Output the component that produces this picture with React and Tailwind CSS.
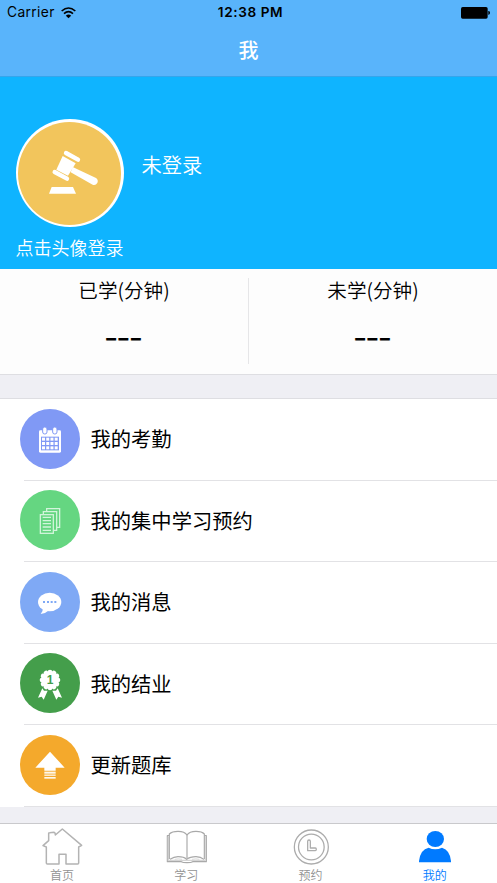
import React, { useState } from 'react';

const WifiIcon = () => (
  <svg viewBox="0 0 45 36" className="w-[15px] h-3">
    <g fill="none" stroke="#000" strokeWidth="4.8">
      <path d="M2 12 Q22.500 -6 43 12" />
      <path d="M9 20 Q22.500 8 36 20" />
    </g>
    <path d="M14.500 26 Q22.500 19 30.500 26 L22.500 34 Z" />
  </svg>
);

const BatteryIcon = () => (
  <svg viewBox="0 0 87 36" className="w-[29px] h-3">
    <rect x="0" y="0" width="80" height="35" rx="5" />
    <path d="M82 12 H84 Q87 14 87 17.500 Q87 21 84 23 H82 Z" />
  </svg>
);

const GavelIcon = () => (
  <svg viewBox="0 0 309 309" className="w-[103px] h-[103px]" fill="#fff">
    <g transform="translate(-58 -51)">
      <path d="M159 246 H223 L232 266 H151 Z" />
      <path d="M192 153 L231 175 L208 212 L173 194 Z" />
      <g stroke="#fff" strokeLinecap="round">
        <path d="M202 144 L238 164" strokeWidth="13" />
        <path d="M168 201 L205 221" strokeWidth="13" />
      </g>
      <path d="M222 186 L292 219 Q300 225 296 234 Q291 242 282 239 L216 202 Z" />
    </g>
  </svg>
);

const CalendarIcon = () => (
  <svg viewBox="0 0 180 180" className="w-full h-full">
    <rect x="57" y="64" width="66" height="67" rx="4" fill="#fff" />
    <rect x="63" y="83" width="54" height="41" fill="#8099f5" />
    {[0, 1, 2].map((row) =>
      [0, 1, 2, 3].map((col) => (
        <rect key={`${row}-${col}`} x={66 + col * 12.7} y={86 + row * 13} width="9" height="9" fill="#fff" />
      ))
    )}
    <g fill="#fff" stroke="#8099f5" strokeWidth="3">
      <rect x="68" y="54" width="13" height="21" rx="6" />
      <rect x="98" y="54" width="13" height="21" rx="6" />
    </g>
  </svg>
);

const PapersIcon = () => (
  <svg viewBox="0 0 180 180" className="w-full h-full" fill="none" stroke="#d3f5dc" strokeWidth="3.8">
    <path d="M80 63 V56 H119 V112 H111" />
    <path d="M70 72 V65 H110 V121 H101" />
    <rect x="61" y="74" width="39" height="56" />
    <path d="M68 82 H93 M68 92 H93 M68 101 H93 M68 111 H93 M68 121 H93" />
  </svg>
);

const MessageIcon = () => (
  <svg viewBox="0 0 180 180" className="w-full h-full">
    <ellipse cx="89" cy="90" rx="35" ry="28" fill="#fff" />
    <path d="M68 108 Q70 118 62 126 Q78 124 88 114 Z" fill="#fff" />
    <g fill="#7fa9f5">
      {[69, 81, 92, 103].map((x) => (
        <rect key={x} x={x} y="87" width="6" height="6" />
      ))}
    </g>
  </svg>
);

const MedalIcon = () => (
  <svg viewBox="0 0 180 180" className="w-full h-full" fill="#fff">
    <circle cx="90" cy="81" r="27" />
    {[0, 30, 60, 90, 120, 150, 180, 210, 240, 270, 300, 330].map((angle) => (
      <circle key={angle} cx="90" cy="57" r="7" transform={`rotate(${angle} 90 81)`} />
    ))}
    <path d="M67 106 L72 113 L83 113 L71 140 L65 131 L54 134 Z" />
    <path d="M113 106 L108 113 L97 113 L109 140 L115 131 L126 134 Z" />
    <text x="90" y="94" textAnchor="middle" fontSize="36" fontWeight="700" fill="#449e4b" className="font-['Liberation_Sans',sans-serif]">1</text>
  </svg>
);

const UpdateIcon = () => (
  <svg viewBox="0 0 180 180" className="w-full h-full" fill="#fff">
    <path d="M90 50 L134 98 H107 V107 H73 V98 H46 Z" />
    <rect x="73" y="110" width="34" height="6" opacity="0.9" />
    <rect x="73" y="118.500" width="34" height="4" opacity="0.9" />
    <rect x="73" y="126" width="34" height="5" opacity="0.9" />
  </svg>
);

const HomeIcon = () => (
  <svg viewBox="0 0 126 117" className="w-[42px] h-[39px]" fill="none" strokeLinejoin="round">
    <path
      d="M61 6 L119 55 L110 60 V108 Q110 111 107 111 H72 V82 H51 V111 H16 Q13 111 13 108 V60 L3 56 L20 41 V19 Q20 17 23 17 L36 16 Q40 17 40 24 Z"
      stroke="#b3b3b3"
      strokeWidth="4.5"
    />
  </svg>
);

const BookIcon = () => (
  <svg viewBox="0 0 126 117" className="w-[42px] h-[39px]" fill="none" stroke="#a9a9a9" strokeWidth="3.5" strokeLinejoin="round">
    <path d="M10 26 H4 V104 H46 Q50 107 63 107 Q76 107 80 104 H121 V26 H115" />
    <path d="M7 29 V100 H118 V29" stroke="#d5d5d5" />
    <path d="M10 96 V21 Q18 13 36 13 Q56 13 63 24 Q70 13 90 13 Q108 13 115 21 V96" />
    <path d="M63 24 V95" />
    <path d="M12 97 Q24 89 36 89 Q54 89 62 97 Q72 89 90 89 Q104 89 114 97" />
    <path d="M26 97 Q36 94 48 97 M78 97 Q90 94 100 97" stroke="#c8c8c8" strokeWidth="2" />
  </svg>
);

const ClockIcon = () => (
  <svg viewBox="0 0 126 117" className="w-[42px] h-[39px]" fill="none" stroke="#acacac" strokeWidth="3.8">
    <circle cx="61" cy="60" r="51" />
    <circle cx="61" cy="60" r="38.500" />
    <path d="M50 43 Q50 39 54 39 Q58 39 58 43 V63 H73 Q76 63 76 67 Q76 71 73 71 H50 Z" strokeLinejoin="round" />
  </svg>
);

const UserIcon = () => (
  <svg viewBox="0 0 126 117" className="w-[42px] h-[39px]" fill="#007aff">
    <ellipse cx="61" cy="36" rx="26" ry="24" />
    <path d="M12 106 V102 Q16 67 41 62 Q60 72 81 62 Q105 69 108 102 V106 Z" />
  </svg>
);

const menuItems = [
  { label: '我的考勤', color: 'bg-[#8099f5]', icon: CalendarIcon },
  { label: '我的集中学习预约', color: 'bg-[#65d681]', icon: PapersIcon },
  { label: '我的消息', color: 'bg-[#7fa9f5]', icon: MessageIcon },
  { label: '我的结业', color: 'bg-[#449e4b]', icon: MedalIcon },
  { label: '更新题库', color: 'bg-[#f4a92c]', icon: UpdateIcon },
];

const tabs = [
  { label: '首页', icon: HomeIcon },
  { label: '学习', icon: BookIcon },
  { label: '预约', icon: ClockIcon },
  { label: '我的', icon: UserIcon },
];

const Stat = ({ label }) => (
  <div className="flex-1 flex flex-col items-center">
    <div className="mt-[7px] text-[19.600px] leading-7">{label}</div>
    <div className="mt-[14px] pr-[3px] text-[31px] leading-10 font-normal font-['Inter',sans-serif] tracking-[-2px]">---</div>
  </div>
);

const App = () => {
  const [activeTab, setActiveTab] = useState('我的');

  return (
    <div className="w-full h-[883px] flex flex-col overflow-hidden bg-[#efeff4] text-black font-['Noto_Sans_CJK_SC',sans-serif]">
      <header className="h-[77px] shrink-0 bg-[#59b4fb] border-b border-[#35a5ec]">
        <div className="h-[25px] grid grid-cols-3 items-center px-[7px] font-['Inter',sans-serif]">
          <div className="flex items-center gap-[6px] text-[13.800px] tracking-[0.35px]">
            Carrier
            <WifiIcon />
          </div>
          <div className="text-center text-[13.600px] font-semibold tracking-[0.6px] pl-1 whitespace-nowrap">12:38 PM</div>
          <div className="flex justify-end">
            <BatteryIcon />
          </div>
        </div>
        <h1 className="text-center text-[20px] leading-[50px] font-medium text-white">我</h1>
      </header>

      <section className="h-[192px] shrink-0 bg-[#0fb4ff] text-white px-[15.500px] pt-[42px]">
        <div className="flex">
          <button className="w-[108px] h-[108px] p-[2.500px] rounded-full bg-white">
            <div className="w-full h-full rounded-full bg-[#f2c55c]">
              <GavelIcon />
            </div>
          </button>
          <div className="ml-[18px] mt-[30px] text-[20.300px] leading-[30px] font-[350]">未登录</div>
        </div>
        <div className="mt-[7px] text-[18px] leading-[26px] font-[350]">点击头像登录</div>
      </section>

      <section className="h-[106px] shrink-0 flex bg-[#fdfdfd] border-b border-[#dedee2] font-[350]">
        <Stat label="已学(分钟)" />
        <div className="w-px h-[86px] mt-[9px] bg-[#e6e6e8]" />
        <Stat label="未学(分钟)" />
      </section>

      <ul className="mt-[23px] shrink-0 bg-white border-t border-[#dedee2]">
        {menuItems.map(({ label, color, icon: Icon }) => (
          <li key={label} className="h-[81.500px] flex items-center pl-5 pb-[2px] relative">
            <div className={`w-[60px] h-[60px] rounded-full ${color}`}>
              <Icon />
            </div>
            <span className="ml-[10.500px] pb-[1px] text-[20.300px] leading-[30px]">{label}</span>
            <div className="absolute left-6 right-0 bottom-0 h-px bg-[#e2e2e5]" />
          </li>
        ))}
      </ul>

      <nav className="mt-auto h-[60px] shrink-0 grid grid-cols-4 bg-white border-t border-[#c9c9cc]">
        {tabs.map(({ label, icon: Icon }) => (
          <button
            key={label}
            onClick={() => setActiveTab(label)}
            className={`flex flex-col items-center pt-[3px] ${activeTab === label ? 'text-[#007aff]' : 'text-[#929292]'}`}
          >
            <div className="pl-[2px]">
              <Icon />
            </div>
            <span className="mt-[1px] text-[12px] leading-[16px] font-[350]">{label}</span>
          </button>
        ))}
      </nav>
    </div>
  );
};

export default App;
